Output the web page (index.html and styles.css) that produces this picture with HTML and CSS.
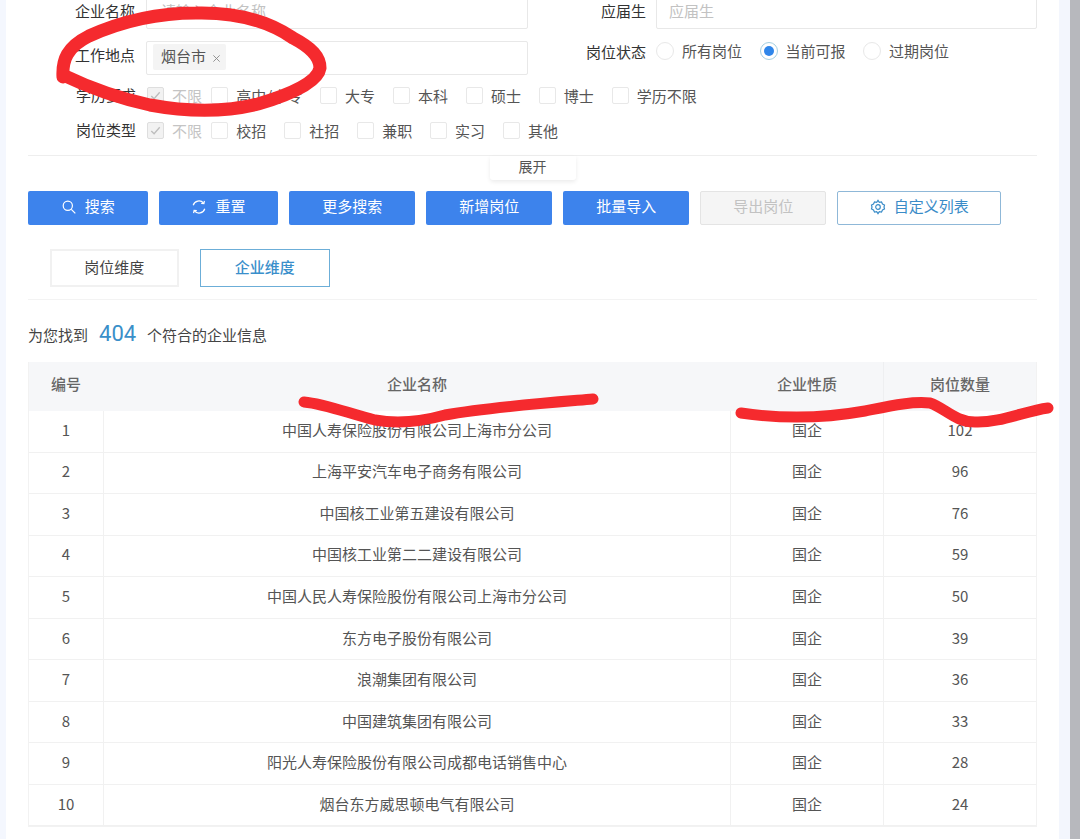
FILE: index.html
```html
<!DOCTYPE html>
<html lang="zh-CN">
<head>
<meta charset="utf-8">
<title>岗位搜索</title>
<link rel="stylesheet" href="styles.css">
</head>
<body>
<div class="frame">
  <div class="strip-left"></div>
  <main class="panel">
    <section class="form">
      <div class="form-row first">
        <div class="field field-left">
          <label class="label">企业名称</label>
          <input class="input input-left" placeholder="请输入企业名称">
        </div>
        <div class="field field-right">
          <label class="label">应届生</label>
          <input class="input" placeholder="应届生">
        </div>
      </div>
      <div class="form-row second">
        <div class="field field-left">
          <label class="label">工作地点</label>
          <div class="input input-left tags">
            <span class="tag">烟台市<svg class="tag-x" viewBox="0 0 10 10"><path d="M1.5 1.5l7 7M8.5 1.5l-7 7"/></svg></span>
          </div>
        </div>
        <div class="field field-right status">
          <label class="label">岗位状态</label>
          <div class="radios">
            <span class="radio-item"><i class="radio"></i>所有岗位</span>
            <span class="radio-item"><i class="radio on"></i>当前可报</span>
            <span class="radio-item"><i class="radio"></i>过期岗位</span>
          </div>
        </div>
      </div>
      <div class="check-row edu">
        <label class="label">学历要求</label>
        <span class="check-item all"><i class="box checked"><svg viewBox="0 0 16 16"><path d="M3.5 8.5l3 3 6-7"/></svg></i><span class="muted">不限</span></span>
        <span class="check-item"><i class="box"></i>高中/中专</span>
        <span class="check-item"><i class="box"></i>大专</span>
        <span class="check-item"><i class="box"></i>本科</span>
        <span class="check-item"><i class="box"></i>硕士</span>
        <span class="check-item"><i class="box"></i>博士</span>
        <span class="check-item"><i class="box"></i>学历不限</span>
      </div>
      <div class="check-row type">
        <label class="label">岗位类型</label>
        <span class="check-item all"><i class="box checked"><svg viewBox="0 0 16 16"><path d="M3.5 8.5l3 3 6-7"/></svg></i><span class="muted">不限</span></span>
        <span class="check-item"><i class="box"></i>校招</span>
        <span class="check-item"><i class="box"></i>社招</span>
        <span class="check-item"><i class="box"></i>兼职</span>
        <span class="check-item"><i class="box"></i>实习</span>
        <span class="check-item"><i class="box"></i>其他</span>
      </div>
    </section>
    <div class="divider top-divider"></div>
    <div class="expand-wrap"><button class="expand">展开</button></div>

    <div class="actions">
      <button class="btn primary w120"><svg class="ico" viewBox="0 0 16 16"><circle cx="6.8" cy="6.8" r="4.6"/><path d="M10.3 10.3l4 4"/></svg>搜索</button>
      <button class="btn primary w120"><svg class="ico" viewBox="0 0 16 16"><path d="M2.2 6.2A6 6 0 0 1 12.6 4.2M13.8 9.8A6 6 0 0 1 3.4 11.8"/><path d="M13.4 1.9l-.5 2.7-2.7-.3M2.6 14.1l.5-2.7 2.7.3"/></svg>重置</button>
      <button class="btn primary w126">更多搜索</button>
      <button class="btn primary w126">新增岗位</button>
      <button class="btn primary w126">批量导入</button>
      <button class="btn disabled w126">导出岗位</button>
      <button class="btn outline"><svg class="ico" viewBox="0 0 16 16"><path d="M8 1.4l1.3 1.9 2.2-.3 1 2.1 2 .9-.5 2 .5 2-2 .9-1 2.1-2.2-.3L8 14.6l-1.3-1.9-2.2.3-1-2.1-2-.9.5-2-.5-2 2-.9 1-2.1 2.2.3z"/><circle cx="8" cy="8" r="2.3"/></svg>自定义列表</button>
    </div>

    <div class="tabs">
      <button class="tab">岗位维度</button>
      <button class="tab active">企业维度</button>
    </div>
    <div class="divider"></div>

    <p class="summary">为您找到<span class="count">404</span>个符合的企业信息</p>

    <div class="table">
      <div class="row head"><div>编号</div><div>企业名称</div><div>企业性质</div><div>岗位数量</div></div>
      <div class="row"><div>1</div><div>中国人寿保险股份有限公司上海市分公司</div><div>国企</div><div>102</div></div>
      <div class="row"><div>2</div><div>上海平安汽车电子商务有限公司</div><div>国企</div><div>96</div></div>
      <div class="row"><div>3</div><div>中国核工业第五建设有限公司</div><div>国企</div><div>76</div></div>
      <div class="row"><div>4</div><div>中国核工业第二二建设有限公司</div><div>国企</div><div>59</div></div>
      <div class="row"><div>5</div><div>中国人民人寿保险股份有限公司上海市分公司</div><div>国企</div><div>50</div></div>
      <div class="row"><div>6</div><div>东方电子股份有限公司</div><div>国企</div><div>39</div></div>
      <div class="row"><div>7</div><div>浪潮集团有限公司</div><div>国企</div><div>36</div></div>
      <div class="row"><div>8</div><div>中国建筑集团有限公司</div><div>国企</div><div>33</div></div>
      <div class="row"><div>9</div><div>阳光人寿保险股份有限公司成都电话销售中心</div><div>国企</div><div>28</div></div>
      <div class="row"><div>10</div><div>烟台东方威思顿电气有限公司</div><div>国企</div><div>24</div></div>
    </div>
  </main>
  <div class="strip-right"></div>
  <div class="scrollbar"></div>

  <svg class="scribble" viewBox="0 0 1080 839" aria-hidden="true">
    <path class="s-thick" d="M63 77C62 60 67 47 89 36C120 22 158 13 196 13C238 12 268 21 293 38C312 48 320 57 320 68C318 82 292 94 258 104C226 112 188 112 150 105C118 98 90 88 63 75"/>
    <path class="s-thin" d="M304 402C326 404 350 414 375 420C398 424 420 422 445 415C490 407 545 403 593 399"/>
    <path class="s-thin" d="M741 413C775 418 820 419 865 411C890 406 912 401 930 403C945 408 955 422 975 422C1000 423 1025 411 1048 408"/>
  </svg>
</div>
</body>
</html>
```
FILE: styles.css
```css
* { box-sizing: border-box; }
html, body { margin: 0; height: 100%; overflow: hidden; }
body {
  font-family: "Noto Sans CJK SC", "Noto Sans", sans-serif;
  font-size: 15px;
  color: #444;
  background: #fff;
}
button, input { font: inherit; }

.frame { position: relative; display: flex; height: 839px; width: 1080px; overflow: hidden; }
.strip-left { width: 6px; background: #f4f7fe; }
.strip-right { width: 11px; background: #f3f6fd; }
.scrollbar { width: 10px; background: #b7b8bd; }
.panel { width: 1053px; padding: 0 22px; background: #fff; }

.form { margin-top: -5px; }
.form-row { display: flex; justify-content: space-between; align-items: center; }
.form-row.second { margin-top: 12px; }
.field { display: flex; align-items: center; height: 34px; }
.field-left { width: 500px; }
.field-right { width: 451px; gap: 10px; justify-content: flex-end; }
.label { color: #333; white-space: nowrap; line-height: 22px; padding-bottom: 2px; }
.second .label { padding-bottom: 6px; }
.field-left .label { width: 107px; text-align: right; margin-right: 11px; }
.input {
  height: 34px;
  width: 381px;
  border: 1px solid #e8e8e8;
  border-radius: 2px;
  padding: 0 12px 3px;
  background: #fff;
  color: #444;
  outline: none;
}
.input-left { width: 382px; padding-left: 14px; }
.input::placeholder { color: #c2c2c2; }
.tags { display: flex; align-items: center; padding: 0 0 0 6px; }
.tag {
  display: flex;
  align-items: center;
  height: 26px;
  padding: 0 5px 4px 8px;
  margin-top: -2px;
  background: #f4f4f4;
  border-radius: 2px;
  color: #555;
}
.tag-x { width: 9px; height: 9px; margin-left: 6px; margin-top: 7px; fill: none; stroke: #888; stroke-width: 1; }

.status { align-self: flex-start; height: 22px; }
.status .label { padding-bottom: 0; }
.radios { display: flex; width: 381px; gap: 17.5px; margin-top: -2px; }
.radio-item { display: flex; align-items: center; gap: 8px; line-height: 22px; color: #555; white-space: nowrap; }
.radio { position: relative; width: 18px; height: 18px; border: 1px solid #e8e8e8; border-radius: 50%; background: #fff; }
.radio.on { border-color: #a5cfe0; }
.radio.on::after {
  content: "";
  position: absolute;
  inset: 3px;
  border-radius: 50%;
  background: #2f86ea;
}

.check-row { display: flex; align-items: center; height: 24px; padding-left: 48px; white-space: nowrap; }
.check-row.edu { margin-top: 8px; }
.check-row.type { margin-top: 11px; }
.check-row .label { padding-bottom: 0; margin-right: 11px; }
.check-item { display: flex; align-items: center; gap: 8px; margin-right: 17.9px; color: #555; }
.check-item.all { margin-right: 9.3px; }
.box { display: block; width: 17px; height: 17px; border: 1px solid #e8e8e8; border-radius: 2px; background: #fff; }
.box.checked { background: #f2f2f2; border-color: #dedede; }
.box svg { display: block; width: 15px; height: 15px; fill: none; stroke: #bdbdbd; stroke-width: 1.4; }
.muted { color: #c4c4c4; }

.divider { height: 1px; background: #eeeeee; }
.top-divider { margin-top: 13px; }
.expand-wrap { display: flex; justify-content: center; }
.expand {
  width: 86px;
  height: 24px;
  border: 0;
  padding: 0 0 5px;
  background: #fff;
  color: #555;
  font-size: 14px;
  box-shadow: 0 2px 4px rgba(0, 0, 0, .08);
  border-radius: 0 0 3px 3px;
}

.actions { display: flex; gap: 11px; margin-top: 11px; }
.btn {
  display: flex;
  align-items: center;
  justify-content: center;
  height: 34px;
  gap: 8px;
  padding: 0 0 5px;
  border-radius: 2px;
  border: 1px solid transparent;
  white-space: nowrap;
}
.btn .ico { margin-top: 2px; }
.w120 { width: 119.6px; }
.w126 { width: 126px; }
.primary { background: #3d83ec; color: #fff; }
.primary .ico { stroke: #fff; }
.disabled { background: #f5f5f5; border-color: #e4e4e4; color: #c2c2c2; }
.outline { width: 164px; background: #fff; border-color: #8fb8d8; color: #3a8cc8; }
.ico { width: 16px; height: 16px; fill: none; stroke: #3a8cc8; stroke-width: 1.2; }

.tabs { display: flex; gap: 21px; margin-top: 24px; padding-left: 21.5px; }
.tab {
  width: 129.5px;
  height: 38px;
  padding: 0 0 4px;
  border: 2px solid #f1f1f1;
  background: #fff;
  color: #444;
}
.tab.active { border: 1px solid #6caed8; color: #3a8fcb; font-weight: 500; }
.tabs + .divider { margin-top: 12px; background: #f3f3f3; }

.summary { display: flex; align-items: center; height: 36px; margin: 16px 0 10px; color: #444; }
.count { margin: 0 11px 2px; color: #3a8fc9; font-family: Roboto, sans-serif; font-size: 22px; }

.table { border-left: 1px solid #f2f2f2; border-right: 1px solid #f2f2f2; border-bottom: 1px solid #f2f2f2; }
.row {
  display: grid;
  grid-template-columns: 75px 627px 153px 1fr;
  height: 41.55px;
  border-bottom: 1px solid #f1f1f1;
  color: #555;
}
.row > div {
  display: flex;
  align-items: center;
  justify-content: center;
  padding-bottom: 4px;
  border-right: 1px solid #f1f1f1;
}
.row > div:last-child { border-right: 0; }
.head {
  height: 49px;
  background: #f6f7f9;
  border-bottom: 0;
  color: #666;
  font-weight: 500;
}
.head > div { border-right-color: transparent; padding-bottom: 6px; }
.head > div:nth-child(3) { border-right-color: #eeeff1; }

.scribble { position: absolute; inset: 0; width: 1080px; height: 839px; pointer-events: none; fill: none; stroke: #f52a2e; stroke-linecap: round; stroke-linejoin: round; }
.s-thick { stroke-width: 13; }
.s-thin { stroke-width: 11; }
```
